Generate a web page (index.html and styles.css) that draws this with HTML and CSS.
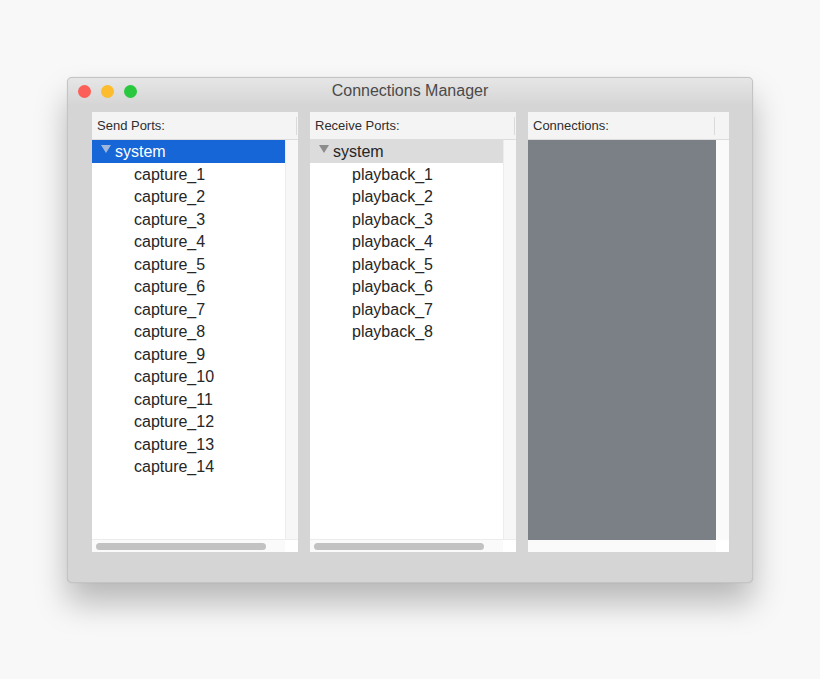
FILE: index.html
```html
<!DOCTYPE html>
<html lang="en">
<head>
<meta charset="UTF-8">
<title>Connections Manager</title>
<link rel="stylesheet" href="styles.css">
</head>
<body>
<div class="window">
<div class="titlebar">
<div class="lights">
<span class="light red"></span>
<span class="light yellow"></span>
<span class="light green"></span>
</div>
<div class="title">Connections Manager</div>
</div>
<div class="panels">
<div class="panel">
<div class="header"><span>Send Ports:</span><span class="sep"></span></div>
<div class="body">
<div class="list">
<div class="row parent selected"><span class="tri"></span>system</div>
<div class="row child">capture_1</div>
<div class="row child">capture_2</div>
<div class="row child">capture_3</div>
<div class="row child">capture_4</div>
<div class="row child">capture_5</div>
<div class="row child">capture_6</div>
<div class="row child">capture_7</div>
<div class="row child">capture_8</div>
<div class="row child">capture_9</div>
<div class="row child">capture_10</div>
<div class="row child">capture_11</div>
<div class="row child">capture_12</div>
<div class="row child">capture_13</div>
<div class="row child">capture_14</div>
</div>
<div class="vscroll"></div>
</div>
<div class="hscroll"><div class="thumb"></div><div class="corner"></div></div>
</div>
<div class="panel">
<div class="header"><span>Receive Ports:</span><span class="sep"></span></div>
<div class="body">
<div class="list">
<div class="row parent inactive"><span class="tri"></span>system</div>
<div class="row child">playback_1</div>
<div class="row child">playback_2</div>
<div class="row child">playback_3</div>
<div class="row child">playback_4</div>
<div class="row child">playback_5</div>
<div class="row child">playback_6</div>
<div class="row child">playback_7</div>
<div class="row child">playback_8</div>
</div>
<div class="vscroll"></div>
</div>
<div class="hscroll"><div class="thumb"></div><div class="corner"></div></div>
</div>
<div class="panel narrow">
<div class="header"><span>Connections:</span><span class="sep"></span></div>
<div class="body">
<div class="canvas"></div>
<div class="vscroll plain"></div>
</div>
<div class="hscroll plain"><div class="corner"></div></div>
</div>
</div>
</div>
</body>
</html>
```
FILE: styles.css
```css
html, body {
margin: 0;
padding: 0;
}

body {
background-color: #f8f8f8;
font-family: "Liberation Sans", Arial, sans-serif;
width: 820px;
height: 679px;
overflow: hidden;
}

.window {
margin: 77px 0 0 67px;
width: 686px;
height: 506px;
box-sizing: border-box;
background-color: #d5d5d5;
border: 1px solid #c4c4c4;
border-radius: 5px;
box-shadow: 0 20px 32px rgba(0, 0, 0, 0.26), 0 0 1px rgba(0, 0, 0, 0.2);
overflow: hidden;
}

.titlebar {
height: 26px;
display: flex;
align-items: center;
position: relative;
background: linear-gradient(#e6e6e6, #d6d6d6);
}

.lights {
display: flex;
gap: 10px;
margin-left: 10px;
}

.light {
width: 13px;
height: 13px;
border-radius: 50%;
}

.red { background-color: #fc5f57; }
.yellow { background-color: #fdbc2e; }
.green { background-color: #29c83f; }

.title {
position: absolute;
left: 0;
right: 0;
text-align: center;
font-size: 16px;
color: #4a4a4a;
}

.panels {
display: flex;
gap: 12px;
padding: 8px 0 0 24px;
}

.panel {
width: 206px;
height: 440px;
display: flex;
flex-direction: column;
background-color: #fff;
}

.panel.narrow {
width: 201px;
}

.header {
height: 28px;
box-sizing: border-box;
border-bottom: 1px solid #dcdcdc;
background-color: #f4f4f4;
display: flex;
align-items: center;
justify-content: space-between;
padding-left: 5px;
font-size: 13px;
color: #2e2e2e;
}

.sep {
width: 1px;
height: 18px;
background-color: #dadada;
margin-right: 1px;
}

.narrow .sep {
margin-right: 14px;
}

.body {
flex: 1;
display: flex;
min-height: 0;
}

.list {
flex: 1;
}

.row {
height: 22.5px;
line-height: 23px;
font-size: 16px;
color: #262626;
white-space: nowrap;
}

.row.parent {
padding-left: 9px;
display: flex;
align-items: center;
}

.row.child {
padding-left: 42px;
}

.tri {
width: 0;
height: 0;
border-left: 5px solid transparent;
border-right: 5px solid transparent;
border-top: 8px solid #8c8c8c;
margin-right: 4px;
margin-top: -4px;
}

.row.selected {
background-color: #1666d8;
color: #fff;
}

.row.selected .tri {
border-top-color: #9fb7dd;
}

.row.inactive {
background-color: #dcdcdc;
}

.vscroll {
width: 12px;
background-color: #f7f7f7;
border-left: 1px solid #ececec;
}

.vscroll.plain {
width: 13px;
background-color: #fafafa;
border-left: 0;
}

.canvas {
flex: 1;
background-color: #7b8087;
}

.hscroll {
height: 12px;
display: flex;
align-items: center;
background-color: #fafafa;
border-top: 1px solid #ececec;
padding-left: 4px;
}

.hscroll.plain {
border-top: 0;
padding-left: 0;
justify-content: flex-end;
}

.thumb {
width: 170px;
height: 7px;
border-radius: 4px;
background-color: #c2c2c2;
}

.corner {
margin-left: auto;
width: 13px;
height: 12px;
background-color: #fff;
}
```
